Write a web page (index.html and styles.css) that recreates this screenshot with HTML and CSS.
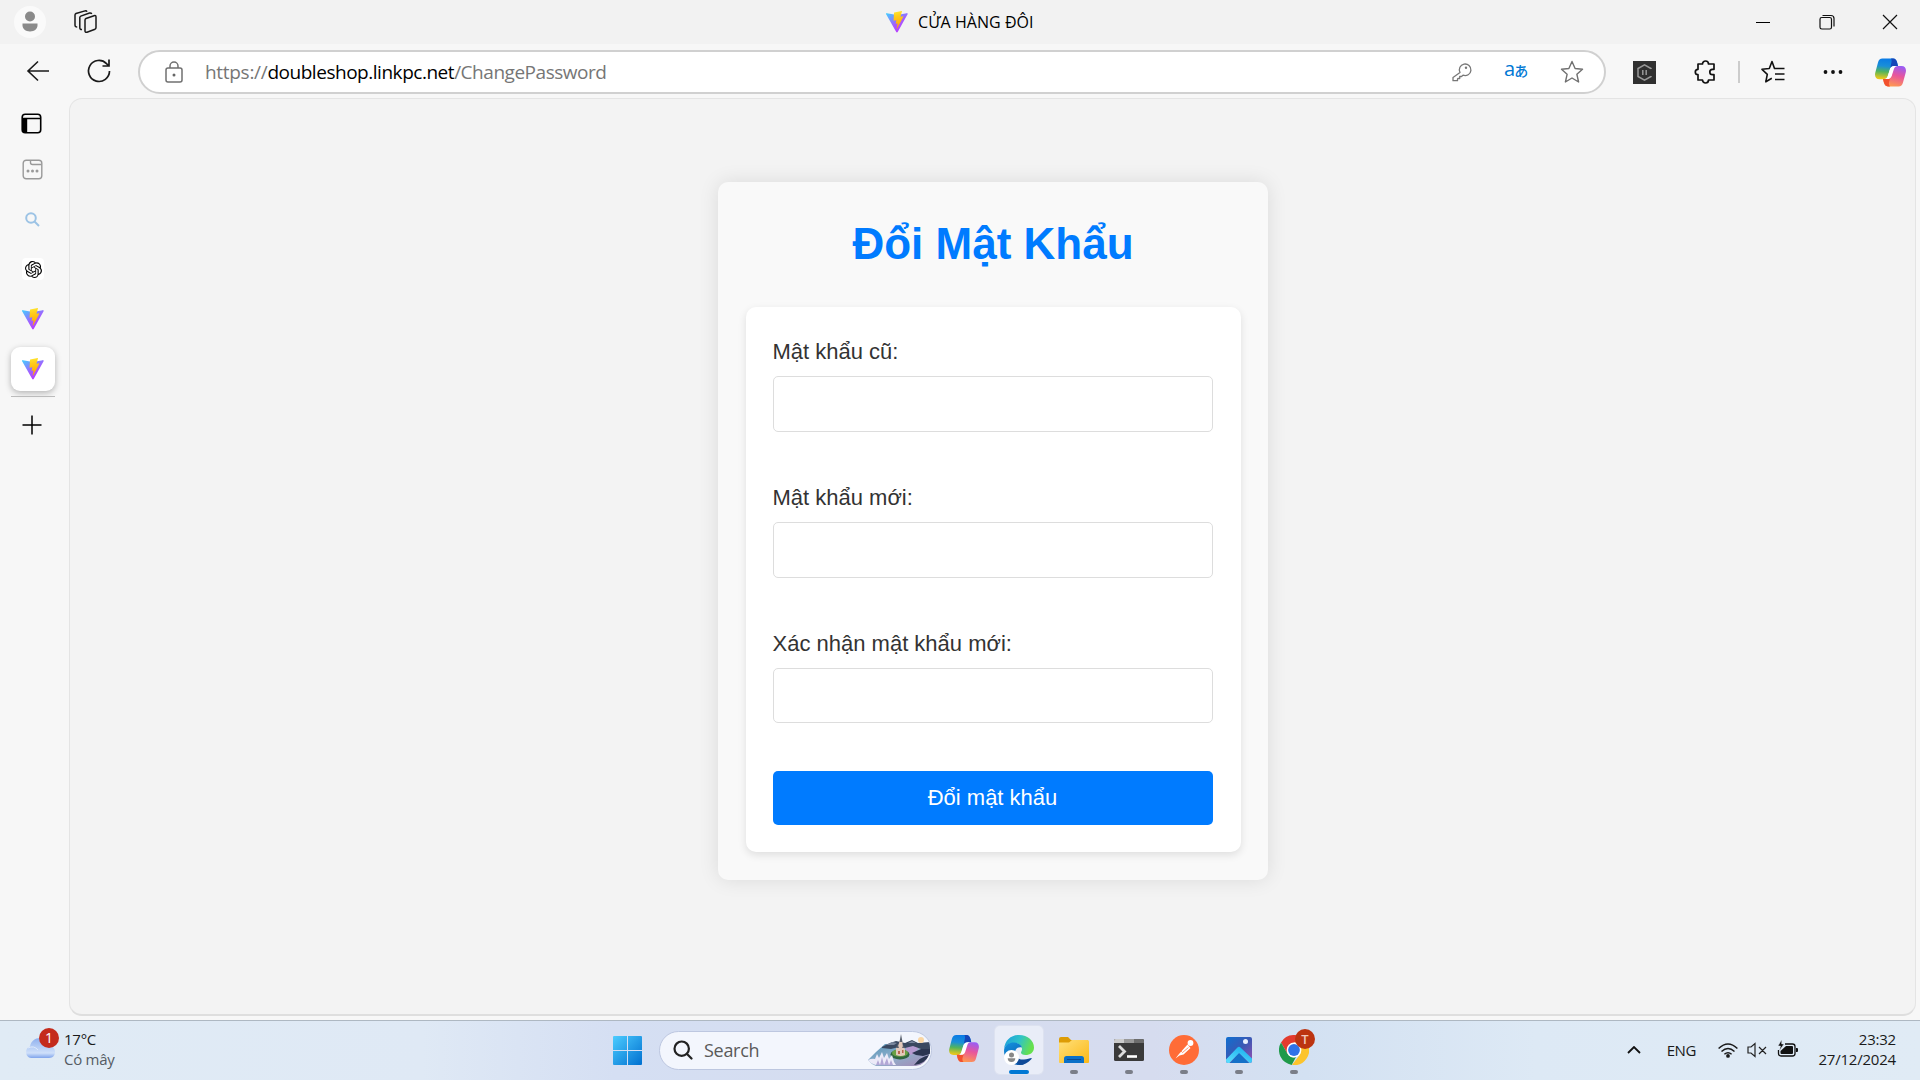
FILE: index.html
```html
<!DOCTYPE html>
<html lang="vi">
<head>
<meta charset="utf-8">
<title>CỬA HÀNG ĐÔI</title>
<link rel="stylesheet" href="styles.css">
</head>
<body>
<svg class="defs" width="0" height="0">
  <defs>
    <linearGradient id="viteA" x1="0" y1="0" x2=".7" y2="1"><stop offset="0" stop-color="#41d1ff"/><stop offset=".6" stop-color="#a45cff"/><stop offset="1" stop-color="#bd34fe"/></linearGradient>
    <linearGradient id="viteB" x1=".4" y1="0" x2=".5" y2="1"><stop offset="0" stop-color="#ffe62e"/><stop offset=".3" stop-color="#ffcb1c"/><stop offset="1" stop-color="#ffa000"/></linearGradient>
    <linearGradient id="copA" x1=".3" y1="0" x2=".2" y2="1"><stop offset="0" stop-color="#0a7be6"/><stop offset=".35" stop-color="#1a8fd8"/><stop offset=".62" stop-color="#52b45c"/><stop offset=".95" stop-color="#e8c81c"/></linearGradient>
    <linearGradient id="copB" x1=".7" y1="0" x2=".4" y2="1"><stop offset="0" stop-color="#9a5cf4"/><stop offset=".45" stop-color="#e8559c"/><stop offset="1" stop-color="#ff9a50"/></linearGradient>
    <linearGradient id="win" x1="0" y1="0" x2="1" y2="1"><stop offset="0" stop-color="#4cccff"/><stop offset="1" stop-color="#0070d0"/></linearGradient>
    <linearGradient id="cloud" x1="0" y1="0" x2="0" y2="1"><stop offset="0" stop-color="#8fb0ee"/><stop offset=".75" stop-color="#cfe0fa"/><stop offset="1" stop-color="#7fa4ec"/></linearGradient>
    <linearGradient id="edgeT" x1="0" y1="0" x2="1" y2=".3"><stop offset="0" stop-color="#1a9be0"/><stop offset=".55" stop-color="#2fc3c8"/><stop offset="1" stop-color="#66e04e"/></linearGradient>
    <linearGradient id="edgeB" x1="0" y1="0" x2=".5" y2="1"><stop offset="0" stop-color="#1494e0"/><stop offset="1" stop-color="#0b5cb0"/></linearGradient>
    <linearGradient id="folder" x1="0" y1="0" x2="1" y2="1"><stop offset="0" stop-color="#ffe07a"/><stop offset="1" stop-color="#fbb816"/></linearGradient>
    <linearGradient id="photo" x1="0" y1="0" x2="1" y2="1"><stop offset="0" stop-color="#0f6fd0"/><stop offset=".5" stop-color="#3a58b4"/><stop offset="1" stop-color="#9a4fb0"/></linearGradient>
    <linearGradient id="hill" x1="0" y1="1" x2=".8" y2="0"><stop offset="0" stop-color="#5fe0ff"/><stop offset="1" stop-color="#1fb4f0"/></linearGradient>
    <linearGradient id="lake" x1="0" y1="0" x2="1" y2="1"><stop offset="0" stop-color="#4f8fb4"/><stop offset=".5" stop-color="#8fb0cc"/><stop offset="1" stop-color="#a787b4"/></linearGradient>
    <clipPath id="photoClip"><rect x="2" y="2" width="26" height="26" rx="2"/></clipPath>
    <symbol id="vite" viewBox="0 0 32 32">
      <path fill="url(#viteA)" d="M31.4 4.8 17 30.6a1.2 1.2 0 0 1-2.1 0L.2 4.8C-.3 3.900.4 2.900 1.400 3.100L15.900 5.700 30.100 3.100c1-.2 1.800.8 1.300 1.700Z"/>
      <path fill="url(#viteB)" d="M22.700.100 12 2.100c-.2 0-.3.200-.3.400L11 13.600c0 .3.200.5.500.4l3-.7c.3 0 .5.200.5.500l-.9 4.300c0 .3.200.5.500.4l1.800-.5c.3 0 .6.200.5.500l-1.400 6.800c0 .400.500.7.700.300l9-17.400c.1-.3-.1-.6-.4-.6l-3.100.6c-.3.100-.5-.200-.5-.5l2-7.100c.1-.3-.2-.6-.5-.5Z"/>
    </symbol>
    <symbol id="copilot" viewBox="0 0 31 28">
      <path fill="url(#copA)" d="M7.500 0H18c2.500 0 3.600 2 4.200 4.200L23 7.500h-3.500c-3 0-4 1.500-4.800 4l-2 6.300c-.7 2-1.700 3-4 3H4.500C.9 20.800-.5 18 .2 14.500L3 4C3.700 1.300 5 0 7.500 0Z"/>
      <path fill="#1546b8" d="M16 0h2c2.500 0 3.600 2 4.200 4.200L23 7.500h-3.500c-2 0-3.200.8-4 2C15.800 5 17.500 3 16 0Z"/>
      <path fill="url(#copB)" d="M23.500 28H13c-2.500 0-3.600-2-4.200-4.200L8 20.600h3.500c3 0 4-1.500 4.800-4l2-6.300c.7-2 1.700-2.800 4-2.800h4.200c3.600 0 5 2.800 4.300 6.300L28 24c-.7 2.700-2 4-4.500 4Z"/>
      <path fill="#f2512e" d="M13 28c-2.500 0-3.600-2-4.200-4.200L8 20.600h3.500c2 0 3.200-.8 4-2C15 22 12.500 25 15 28Z"/>
      <path fill="#fff" d="M19.500 7.500h3.200c-2.200.2-3 1-3.700 2.800l-2.300 7.200c-.8 2-2 3.100-4.200 3.100H9.200c2-.2 2.900-1.200 3.500-2.800l2-6.300c.8-2.500 1.800-4 4.800-4Z"/>
    </symbol>
  </defs>
</svg>

<header class="titlebar">
  <span class="avatar"><svg width="32" height="32" viewBox="0 0 32 32"><ellipse cx="16" cy="10.500" rx="5" ry="5" fill="#8a8a8a"/><path d="M8.500 17.500h15v2c0 3-3 6-7.500 6s-7.500-3-7.500-6Z" fill="#8a8a8a"/></svg></span>
  <svg class="workspaces" width="24" height="24" viewBox="0 0 24 24" fill="none" stroke="#1a1a1a" stroke-width="1.500"><path d="M12 8.500 20 5.700q2-.6 2 1.300v10.500q0 1.200-1 1.700l-8 3q-2 .6-2-1.200V10q0-1 1-1.500Z"/><path d="M8 19.500q-2.200.2-2.200-1.800V7.600q0-1 1-1.500L15.500 3q1.700-.4 2.200.9M3.200 17Q1 17 1 15V5q0-1 1-1.500L11 .900q1.500-.3 2 .8"/></svg>
  <div class="tab-title"><svg width="22" height="22"><use href="#vite"/></svg><span>CỬA HÀNG ĐÔI</span></div>
  <div class="window-buttons">
    <svg width="16" height="16" viewBox="0 0 16 16" stroke="#000" fill="none"><path d="M1 8.500h14"/></svg>
    <svg width="16" height="16" viewBox="0 0 16 16" stroke="#111" fill="none" stroke-width="1.200"><rect x="1" y="3.500" width="11.500" height="11.500" rx="1.800"/><path d="M3.500 1.500h8.500a3 3 0 0 1 3 3v8"/></svg>
    <svg width="16" height="16" viewBox="0 0 16 16" stroke="#111" fill="none" stroke-width="1.200"><path d="m1 1 14 14M15 1 1 15"/></svg>
  </div>
</header>

<div class="toolbar">
  <svg class="back" width="24" height="24" viewBox="0 0 24 24" fill="none" stroke="#1a1a1a" stroke-width="1.600"><path d="M12 2.500 2 12l10 9.500M2 12h21"/></svg>
  <svg class="reload" width="24" height="24" viewBox="0 0 24 24" fill="none" stroke="#1a1a1a" stroke-width="1.700"><path d="M22.500 12A10.500 10.500 0 1 1 19.500 4.600L22 7M22 .5V7h-6.500"/></svg>
  <div class="address">
    <svg width="18" height="22" viewBox="0 0 18 22" fill="none" stroke="#707070" stroke-width="1.500"><rect x="1" y="7" width="16" height="14" rx="2"/><path d="M5 7V5a4 4 0 0 1 8 0v2"/><circle cx="9" cy="14" r="1.500" fill="#666" stroke="none"/></svg>
    <p class="url"><span class="scheme">https://</span><span class="domain">doubleshop.linkpc.net</span><span class="path">/ChangePassword</span></p>
    <svg class="key" width="20" height="20" viewBox="0 0 20 20" fill="none" stroke="#777" stroke-width="1.300"><path d="M8 10.500a5.800 5.800 0 1 1 3 2.700L9.500 14.500H7.700v2H6l-.5.500v1.700H1v-3.200l7-5Z" stroke-linejoin="round"/><circle cx="14" cy="5.800" r="1.200" fill="#777" stroke="none"/></svg>
    <span class="translate"><span>a</span><span class="kana">あ</span></span>
    <svg class="star" width="24" height="24" viewBox="0 0 24 24" fill="none" stroke="#707070" stroke-width="1.400" stroke-linejoin="round"><path d="m12 1.500 3.100 7 7.400.8-5.600 5 1.700 7.700L12 18l-6.600 4 1.700-7.700-5.600-5 7.400-.8Z"/></svg>
  </div>
  <svg class="ext" width="23" height="23" viewBox="0 0 23 23"><path fill="#303030" d="M0 0h23v23H0z"/><path d="M18 8V7.500L11.500 3.800 5 7.500v8l6.500 3.700 6.500-3.700V15M9.800 9v5M13.200 9v5" fill="none" stroke="#999" stroke-width="1.500"/></svg>
  <svg class="puzzle" width="22" height="24" viewBox="0 0 22 24" fill="none" stroke="#111" stroke-width="1.700" stroke-linejoin="round"><path d="M4 4h4.500a3 3 0 0 1 6 0H20v5.300h-1.500a2.700 2.700 0 0 0 0 5.400H20V20h-5.500a3 3 0 0 1-6 0H4v-5.300a2.700 2.700 0 0 1 0-5.400Z"/></svg>
  <i class="divider"></i>
  <svg class="favs" width="24" height="24" viewBox="0 0 24 24" fill="none" stroke="#111" stroke-width="1.600" stroke-linejoin="round"><path d="M14 8.500h-.5L11 1.500 8.300 8.500 1 9.300l5.300 5-1.500 7.500 6-3.500"/><path d="M14 8.500h9.500M14 14h9.500M14 19.500h9.500"/></svg>
  <svg class="more" width="20" height="6" viewBox="0 0 20 6" fill="#111"><circle cx="2.500" cy="3" r="1.900"/><circle cx="10" cy="3" r="1.900"/><circle cx="17.500" cy="3" r="1.900"/></svg>
  <svg class="cop" width="31" height="29"><use href="#copilot"/></svg>
</div>

<main class="workspace">
  <nav class="tabs">
    <svg class="t-panel" width="21" height="21" viewBox="0 0 21 21"><rect x="1.200" y="1.200" width="18.500" height="18.500" rx="3" fill="none" stroke="#000" stroke-width="1.600"/><path d="M1.200 5.500h18.500" stroke="#000" stroke-width="1.500"/><path d="M1.200 5.500h5v14.300H4q-2.800-.3-2.800-2.800Z"/></svg>
    <svg class="t-group" width="21" height="21" viewBox="0 0 21 21" fill="none" stroke="#999" stroke-width="1.400"><rect x="1.200" y="1.200" width="18.600" height="18.600" rx="3"/><path d="M8.500 1.500v2q0 2 2 2h9"/><g fill="#999" stroke="none"><circle cx="6" cy="12" r="1.500"/><circle cx="10.500" cy="12" r="1.500"/><circle cx="15" cy="12" r="1.500"/></g></svg>
    <svg class="t-search" width="15" height="15" viewBox="0 0 15 15" fill="none" stroke="#9cc3e5" stroke-width="2"><circle cx="6" cy="6" r="4.800"/><path d="m9.500 9.500 4.500 4.500"/></svg>
    <span class="t-gpt"><svg width="17" height="17" viewBox="0 0 24 24"><path d="M22.2819 9.8211a5.9847 5.9847 0 0 0-.5157-4.9108 6.0462 6.0462 0 0 0-6.5098-2.9A6.0651 6.0651 0 0 0 4.9807 4.1818a5.9847 5.9847 0 0 0-3.9977 2.9 6.0462 6.0462 0 0 0 .7427 7.0966 5.98 5.98 0 0 0 .511 4.9107 6.051 6.051 0 0 0 6.5146 2.9001A5.9847 5.9847 0 0 0 13.2599 24a6.0557 6.0557 0 0 0 5.7718-4.2058 5.9894 5.9894 0 0 0 3.9977-2.9001 6.0557 6.0557 0 0 0-.7475-7.0729zm-9.022 12.6081a4.4755 4.4755 0 0 1-2.8764-1.0408l.1419-.0804 4.7783-2.7582a.7948.7948 0 0 0 .3927-.6813v-6.7369l2.02 1.1686a.071.071 0 0 1 .038.052v5.5826a4.504 4.504 0 0 1-4.4945 4.4944zm-9.6607-4.1254a4.4708 4.4708 0 0 1-.5346-3.0137l.142.0852 4.783 2.7582a.7712.7712 0 0 0 .7806 0l5.8428-3.3685v2.3324a.0804.0804 0 0 1-.0332.0615L9.74 19.9502a4.4992 4.4992 0 0 1-6.1408-1.6464zM2.3408 7.8956a4.485 4.485 0 0 1 2.3655-1.9728V11.6a.7664.7664 0 0 0 .3879.6765l5.8144 3.3543-2.0201 1.1685a.0757.0757 0 0 1-.071 0l-4.8303-2.7865A4.504 4.504 0 0 1 2.3408 7.872zm16.5963 3.8558L13.1038 8.364 15.1192 7.2a.0757.0757 0 0 1 .071 0l4.8303 2.7913a4.4944 4.4944 0 0 1-.6765 8.1042v-5.6772a.79.79 0 0 0-.407-.667zm2.0107-3.0231l-.142-.0852-4.7735-2.7818a.7759.7759 0 0 0-.7854 0L9.409 9.2297V6.8974a.0662.0662 0 0 1 .0284-.0615l4.8303-2.7866a4.4992 4.4992 0 0 1 6.6802 4.66zM8.3065 12.863l-2.02-1.1638a.0804.0804 0 0 1-.038-.0567V6.0742a4.4992 4.4992 0 0 1 7.3757-3.4537l-.142.0805L8.704 5.459a.7948.7948 0 0 0-.3927.6813zm1.0976-2.3654l2.602-1.4998 2.6069 1.4998v2.9994l-2.5974 1.4997-2.6067-1.4997Z"/></svg></span>
    <svg class="t-vite" width="22" height="22"><use href="#vite"/></svg>
    <span class="t-active"><svg width="22" height="22"><use href="#vite"/></svg></span>
    <i class="t-line"></i>
    <svg class="t-plus" width="20" height="20" viewBox="0 0 20 20" stroke="#000" stroke-width="1.500"><path d="M.5 10h19M10 .5v19"/></svg>
  </nav>
  <section class="page">
    <div class="card">
      <h1>Đổi Mật Khẩu</h1>
      <form>
        <label for="old">Mật khẩu cũ:</label>
        <input id="old" type="password">
        <label for="new">Mật khẩu mới:</label>
        <input id="new" type="password">
        <label for="confirm">Xác nhận mật khẩu mới:</label>
        <input id="confirm" class="last" type="password">
        <button type="button">Đổi mật khẩu</button>
      </form>
    </div>
  </section>
</main>

<footer class="taskbar">
  <div class="weather">
    <span class="cloud"><svg width="30" height="22" viewBox="0 0 30 22"><path fill="url(#cloud)" d="M6 21a6 6 0 0 1-1-11.500C6 4 10 1 15 1c5 0 8 3 9 8 4 0 6 3 6 6s-2 6-6 6Z"/><path d="M3 11q6-3 10 2" fill="none" stroke="#dfeafc"/></svg><b class="badge">1</b></span>
    <div><p>17°C</p><p class="dim">Có mây</p></div>
  </div>
  <div class="apps">
    <svg class="start" width="29" height="29" viewBox="0 0 29 29" fill="url(#win)"><path d="M1 0h13v14H0V1q0-1 1-1ZM15 0h13q1 0 1 1v13H15ZM0 15h14v14H1q-1 0-1-1ZM15 15h14v13q0 1-1 1H15Z"/></svg>
    <div class="search">
      <svg width="20" height="20" viewBox="0 0 20 20" fill="none" stroke="#222" stroke-width="2.200"><circle cx="8.700" cy="8.700" r="7.200"/><path d="m13.800 13.800 4.700 4.700" stroke-linecap="round"/></svg>
      <span>Search</span>
      <svg class="scene" width="62" height="32" viewBox="0 0 62 32"><path fill="url(#lake)" d="M0 26 8 18 17 10l45-1v9q-4 13-14 14H8Q3 30 0 26Z"/><path fill="#b59ad0" d="M38 12l14 0-6 8-8 2Z"/><path fill="#3a4860" d="M14 13l8-4 6-2 9 2 7-3 6 3 12-1v8l-9-1-8-3-8 2-6-1-8 2-9-1Z"/><path fill="#78859c" d="m18 11 6-3 5 1-3 2ZM40 9l4-2 4 2Z"/><path fill="#2b3550" d="M44 19l9-4 9 0v5l-7 2-7-1ZM46 31q11-1 15-10-9 2-15 10Z"/><circle cx="53" cy="6" r="3" fill="#f9d6a4"/><ellipse cx="32" cy="20.500" rx="9.500" ry="5" fill="#2f6540"/><ellipse cx="32" cy="19" rx="8" ry="3.800" fill="#69a044"/><path fill="#e2c8ba" d="M28 21v-7l2-2 2-6 2 0 1 7 2 2v6q-4 2-9 0Z"/><path fill="#59606e" d="m31.500 8 1.500-8 1.500 8ZM28 14l1.500-4 1.500 4ZM34 14l1.500-3 1.500 3Z"/><path fill="#b8664c" d="M30 20h2v-3h-2ZM34 19h1.500v-3H34Z"/><path fill="#eceaf8" d="M0 26q4-2 7-1l2-5 2 4 3-6 2 6 3-5 2 6 3-4 2 7 2 3H8Q3 30 0 26Z"/><path fill="#b3a8d6" d="m8 31 2-5 2 5 2-8 2 8 3-7 2 7 2-5 2 5Z"/></svg>
    </div>
    <svg class="cop2" width="30" height="27"><use href="#copilot"/></svg>
    <span class="app active"><svg width="30" height="30" viewBox="0 0 30 30"><path fill="url(#edgeT)" d="M0 14C1 5 7 0 15 0c9 0 15 6 15 12.500 0 5-4 7.500-8.500 7.500-3 0-4.500-1-4.500-2.500 0-1 1-1.500 1-3.500 0-3-3-6-8-6-6 0-9 3-10 6Z"/><path fill="url(#edgeB)" d="M0 16C0 10 5 7.500 10 7.500c4 0 7 2 8 5-5-1-7 2-7 5.500 0 6 4 10 9 11.500C9 32 0 25 0 16Z"/><path fill="#0f4a98" d="M11 18c0 5 5 7 9 6.500 3 0 6-1.500 7.500-1.500.5.500 0 1-.5 1.500C24 28 20 30 15.500 30 11 27 10 22 11 18Z"/><circle cx="7.500" cy="22.500" r="7.500" fill="#fff"/><circle cx="7.500" cy="20" r="2.500" fill="#888"/><path fill="#888" d="M3.700 23.300h7.600q0 3.700-3.800 3.700t-3.800-3.700Z"/></svg></span>
    <span class="app"><svg width="30" height="30" viewBox="0 0 30 30"><path fill="#dd9c05" d="M0 4q0-2 2-2h7l3 3h17v6H0Z"/><path fill="url(#folder)" d="M0 7.500h10L13 5h15.500q1.500 0 1.500 1.500V27q0 1-1 1H1q-1 0-1-1Z"/><path fill="#0a70c8" d="M5 28v-4.500Q5 21 7.500 21h15q2.500 0 2.500 2.500V28Z"/><path d="M8 24.500h14" stroke="#0b4a90"/></svg></span>
    <span class="app"><svg width="30" height="30" viewBox="0 0 30 30"><rect y="4" width="30" height="22" rx="1.500" fill="#3a3a3a"/><path fill="#ccc" d="M1.500 4H10v4H0V5.500Q0 4 1.500 4Z"/><path fill="#999" d="M10 4h10v4H10Z"/><path fill="#6c6c6c" d="M20 4h8.500Q30 4 30 5.500V8H20Z"/><path d="m5 11 5.500 5.500L5 22" fill="none" stroke="#ddd" stroke-width="2.800"/><path d="M13 21.500h10" stroke="#fff" stroke-width="2.600"/></svg></span>
    <span class="app"><svg width="30" height="30" viewBox="0 0 30 30"><circle cx="15" cy="15" r="15" fill="#ff6c37"/><circle cx="21.500" cy="8" r="2.900" fill="#fff"/><path fill="#fff" d="m18.500 9.500 3 3.500-7 6.500-4 1-4 3 3.500-4.500Z"/><path d="m12 16 1.500 1.500 6-5" fill="none" stroke="#ff6c37" stroke-width=".7"/></svg></span>
    <span class="app"><svg width="30" height="30" viewBox="0 0 30 30"><rect x="2" y="2" width="26" height="26" rx="2" fill="url(#photo)"/><g clip-path="url(#photoClip)"><path fill="#1470c8" d="m5 30 10-12 12 12Z"/><path fill="none" stroke="url(#hill)" stroke-width="5" stroke-linejoin="round" d="M2 28 15 14.500 29 28"/></g><circle cx="21.500" cy="6.500" r="2.500" fill="#e8f0ff"/></svg></span>
    <span class="app"><svg width="30" height="30" viewBox="0 0 30 30"><path fill="#e33b2e" d="M2 7.500a15 15 0 0 1 26 0H15L8.500 18.700Z"/><path fill="#1f9a4a" d="M2 7.500 8.500 18.700A7.500 7.500 0 0 0 17 22l-4.300 7.900A15 15 0 0 1 2 7.500Z"/><path fill="#fcc42c" d="M15 7.500h13A15 15 0 0 1 13 30l8.500-11.200Z"/><circle cx="15" cy="15" r="7.400" fill="#fff"/><circle cx="15" cy="15" r="5.900" fill="#2f72e8"/></svg><b class="badge t">T</b></span>
  </div>
  <div class="tray">
    <svg width="14" height="8" viewBox="0 0 14 8" fill="none" stroke="#111" stroke-width="1.800"><path d="m1 7 6-6 6 6"/></svg>
    <span class="lang">ENG</span>
    <svg class="wifi" width="20" height="15" viewBox="0 0 20 15" fill="none" stroke="#1a1a1a" stroke-width="1.500"><path d="M.6 5.500q9.400-9 18.800 0M3.500 8.500q6.500-6 13 0M6.400 11.300q3.600-3.200 7.200 0"/><circle cx="10" cy="12.900" r="1.900" fill="#1a1a1a" stroke="none"/></svg>
    <svg class="vol" width="20" height="16" viewBox="0 0 20 16" fill="none" stroke="#222" stroke-width="1.200"><path d="M1 5h3l4-3.500v13L4 11H1ZM12 5l7 7M19 5l-7 7"/></svg>
    <svg class="bat" width="21" height="18" viewBox="0 0 21 18"><path d="M8 4h7.500q2.500 0 2.500 2.500v7Q18 16 15.500 16H4q-2.500 0-2.500-2.500V10" fill="none" stroke="#111" stroke-width="1.300"/><path d="M9 6h6q1 0 1 1v6q0 1-1 1H4.500q-1 0-1-1v-2ZM19 8h1q1 0 1 1v2q0 1-1 1h-1Z" fill="#111"/><path d="M4.500 0 1 6h2.500L2.500 10.500 7 4H4.700V0Z" fill="#111" stroke="#dfe9f4" stroke-width=".5"/></svg>
    <div class="clock"><p>23:32</p><p class="date">27/12/2024</p></div>
  </div>
</footer>
</body>
</html>
```
FILE: styles.css
```css
* { box-sizing: border-box; }
html, body { margin: 0; height: 100%; overflow: hidden; }
body {
  display: flex; flex-direction: column;
  width: 1920px; height: 1080px;
  background: #f7f7f7; color: #000;
  font-family: "Open Sans", "Noto Sans", sans-serif;
}
p { margin: 0; }
svg { display: block; flex: none; }
.defs { position: absolute; }

/* Window title bar */
.titlebar {
  display: grid; grid-template-columns: 60px 826px 1fr auto;
  align-items: center; height: 44px; flex: none;
  padding: 0 22px 0 14px; background: #f2f2f2;
}
.avatar { width: 32px; height: 32px; border-radius: 50%; background: #fafafa; }
.tab-title { display: flex; align-items: center; gap: 10px; margin-left: -14px; font-size: 16px; white-space: nowrap; letter-spacing: 0.05px; }
.window-buttons { display: flex; gap: 47.500px; }

/* Browser toolbar */
.toolbar { display: flex; align-items: center; height: 54px; flex: none; padding: 2px 14px 0 26px; }
.back { margin-bottom: 2px; }
.reload { margin: 0 0 2px 37px; }
.address {
  display: flex; align-items: center;
  width: 1468px; height: 44px; margin-left: 27px; padding: 0 20px 0 25px;
  border: 2px solid #d0d0d0; border-radius: 22px; background: #fff;
}
.url { margin-left: 22px; font-size: 19px; white-space: nowrap; color: #767676; letter-spacing: -0.47px; }
.scheme { letter-spacing: -0.3px; }
.domain { color: #000; }
.key { margin-left: auto; }
.translate { display: flex; width: 25px; margin: 0 31px 0 32px; color: #0078d4; font-size: 20px; line-height: 22px; padding-bottom: 3px; }
.kana { font: 500 14px/25px "Noto Sans CJK JP", sans-serif; margin-left: -1px; }
.ext { margin-left: 27px; }
.puzzle { margin-left: 38px; }
.divider { width: 2px; height: 22px; margin-left: 22px; background: #ccc; }
.favs { margin-left: 21px; }
.more { margin-left: 38px; }
.cop { margin-left: auto; }

/* Vertical tabs and page */
.workspace { display: flex; flex: 1; min-height: 0; padding: 0 4px 4px 0; }
.tabs { display: flex; flex-direction: column; align-items: center; width: 69px; padding: 15px 3px 0 0; flex: none; }
.t-panel { margin-right: 3px; }
.t-group { margin-top: 25px; margin-right: 1px; }
.t-search { margin-top: 32px; margin-right: 1px; }
.t-gpt { display: grid; place-items: center; width: 22px; height: 22px; margin-top: 31px; border-radius: 4px; background: #fff; }
.t-vite { margin-top: 28px; }
.t-active { display: grid; place-items: center; width: 44px; height: 44px; margin-top: 17px; border-radius: 9px; background: #fff; box-shadow: 0 2px 6px rgba(0,0,0,.28); }
.t-line { width: 44px; height: 1px; margin-top: 5px; background: #bbb; }
.t-plus { margin: 18px 2px 0 0; }
.page {
  flex: 1; display: flex; justify-content: center; align-items: flex-start;
  padding-top: 83px; border: 1px solid #e4e4e4; border-bottom: 2px solid #dedede;
  border-radius: 13px; background: #f3f3f3;
}
.card {
  width: 550px; height: 698px; padding: 0 27px 0 28px; border-radius: 10px; background: #f9f9f9;
  box-shadow: 0 0 20px rgba(0,0,0,.1);
  font-family: "Liberation Sans", Arial, sans-serif;
}
h1 { margin: 0; padding-top: 36px; height: 125px; font-size: 44px; line-height: 52px; color: #007bff; text-align: center; }
form { display: flex; flex-direction: column; height: 545px; padding: 27px 28px 27px 27px; border-radius: 10px; background: #fff; box-shadow: 0 3px 8px rgba(0,0,0,.11); }
label { height: 42px; padding-top: 5px; font-size: 22px; line-height: 26px; color: #333; }
input { width: 100%; height: 56px; margin: 0 0 48px; border: 1px solid #ddd; border-radius: 5px; background: #fff; }
.last { height: 55px; }
button { height: 54px; border: 0; border-radius: 5px; background: #007bff; color: #fff; font: 22px "Liberation Sans", Arial, sans-serif; padding: 0; }

/* Taskbar */
.taskbar {
  display: grid; grid-template-columns: 613px 1fr auto; align-items: center;
  height: 60px; flex: none; border-top: 1px solid #aeb8c2; padding-bottom: 1px;
  background: linear-gradient(90deg, #e0ebf5 0, #dfe9f5 22%, #d5dff3 32%, #d5dcef 48%, #d6dcef 60%, #d3e1f2 68%, #dde9f5 80%, #e0ebf5 100%);
  font-size: 15px; line-height: 20px; color: #1a1a1a;
}
.weather { display: flex; gap: 9px; padding: 0 0 3px 25px; align-items: center; letter-spacing: -0.25px; }
.dim { color: #555c64; }
.cloud { position: relative; padding-bottom: 2px; }
.badge {
  position: absolute; right: -4px; top: -9px; width: 20px; height: 20px; border-radius: 50%;
  background: #c42b1c; color: #fff; font-size: 14px; line-height: 20px; font-weight: 400; text-align: center; letter-spacing: 0;
}
.apps { display: flex; align-items: center; }
.search {
  display: flex; align-items: center; width: 273px; height: 39px; margin-left: 17px; padding: 0 1px 0 13px;
  border: 1px solid #bdc7e0; border-radius: 20px; background: #f3f6fd; color: #5a5a5a; font-size: 18px;
}
.search span { margin-left: 11px; letter-spacing: -0.3px; }
.scene { margin-left: auto; border-radius: 0 14px 14px 0; }
.cop2 { margin: 0 16px 4px 17px; }
.app { position: relative; display: grid; place-items: center; width: 48px; height: 48px; margin-right: 7px; border-radius: 5px; }
.app::after { content: ""; position: absolute; left: 20px; bottom: 0; width: 8px; height: 4px; border-radius: 2px; background: #7a7e88; }
.active { background: #e9edf8; box-shadow: 0 0 0 1px #dde2f0; }
.active::after { left: 14px; width: 20px; background: #0078d4; }
.badge.t { right: 3px; top: 3px; background: #bc3410; color: #f0c8bc; font-size: 13px; font-weight: 600; }
.tray { display: flex; align-items: center; padding-right: 24px; }
.lang { margin-left: 26px; letter-spacing: -0.4px; padding-bottom: 1px; }
.wifi { margin-left: 22px; }
.vol { margin-left: 9px; }
.bat { margin-left: 10px; margin-bottom: 3px; }
.clock { width: 98px; text-align: right; letter-spacing: -0.2px; padding-bottom: 3px; }
```
